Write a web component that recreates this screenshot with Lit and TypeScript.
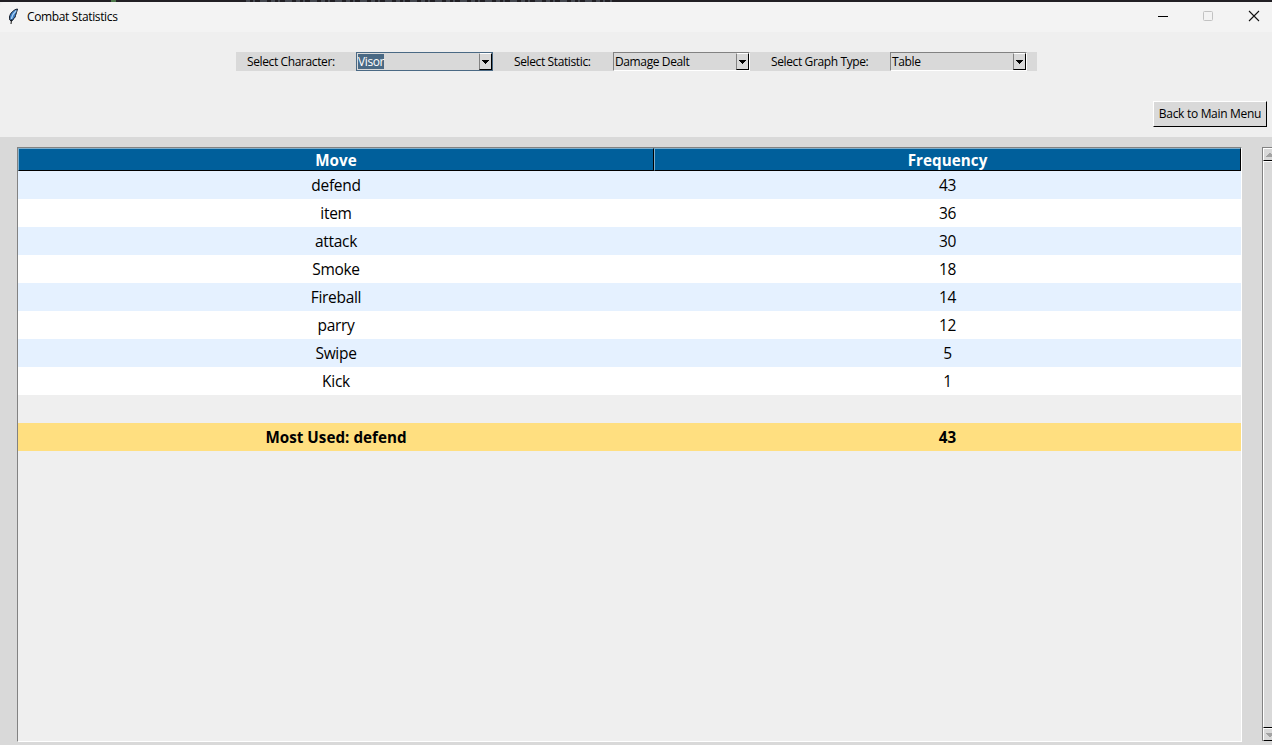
import { LitElement, html, css } from "lit";
import { customElement, property } from "lit/decorators.js";
import { classMap } from "lit/directives/class-map.js";

@customElement("combo-box")
class ComboBox extends LitElement {
  @property() value = "";
  @property({ type: Boolean }) focused = false;
  static styles = css`
    :host { display: block; width: 137px; height: 19px; }
    .box { box-sizing: border-box; display: flex; width: 137px; height: 19px; background: #d9d9d9;
      border: 1px solid; border-color: #828282 #fff #fff #828282; }
    .box.focused { border-color: #4a6984; }
    .text { flex: 1; height: 17px; line-height: 17px; padding-left: 1px; white-space: nowrap; }
    .selected { display: inline-block; height: 15px; line-height: 15px; margin-top: 1px; background: #4a6984; color: #fff; }
    .arrow { box-sizing: border-box; width: 13px; height: 17px; display: flex; align-items: center; justify-content: center;
      border: 1px solid; border-color: #fff #000 #000 #828282; background: #d9d9d9; }
    svg { display: block; }
  `;
  render() {
    return html`<div class=${classMap({ box: true, focused: this.focused })}>
      <div class="text"><span class=${classMap({ selected: this.focused })}>${this.value}</span></div>
      <div class="arrow"><svg width="7" height="4" shape-rendering="crispEdges"><path d="M0 0h7v1H6v1H5v1H4v1H3V3H2V2H1V1H0z"/></svg></div>
    </div>`;
  }
}

@customElement("app-root")
class AppRoot extends LitElement {
  moves: [string, number][] = [
    ["defend", 43], ["item", 36], ["attack", 30], ["Smoke", 18],
    ["Fireball", 14], ["parry", 12], ["Swipe", 5], ["Kick", 1],
  ];
  static styles = css`
    :host { display: flex; flex-direction: column; width: 1272px; height: 745px; overflow: hidden;
      background: #efefef; color: #000; font: 12px/19px "Open Sans", "Noto Sans", sans-serif; letter-spacing: -0.38px; }
    .backdrop { height: 2px; background: #211f24; flex: none; overflow: hidden; display: flex; }
    .backdrop svg { display: block; }
    .titlebar { height: 30px; flex: none; display: flex; align-items: center; background: #f3f3f3; border-top-left-radius: 5px; }
    .feather { margin: -2px 8px 0 7px; display: block; }
    .caption { flex: 1; margin-top: -2px; letter-spacing: -0.36px; }
    .controls { display: flex; gap: 34px; margin-right: 12px; margin-top: -2px; }
    .controls svg { display: block; }
    .filters { display: flex; flex: none; width: 801px; height: 19px; margin: 20px 0 0 236px; background: #d9d9d9; }
    .label { box-sizing: border-box; white-space: nowrap; }
    .first { width: 120px; padding-left: 11px; }
    .second { width: 120px; padding-left: 21px; }
    .third { width: 140px; padding-left: 21px; }
    .actions { display: flex; justify-content: flex-end; padding: 30px 5px 10px 0; flex: none; }
    .back { box-sizing: border-box; width: 114px; height: 26px; border: 1px solid; border-color: #fff #000 #000 #fff;
      background: #d9d9d9; text-align: center; line-height: 24px; white-space: nowrap; letter-spacing: -0.3px; }
    .panel { box-sizing: border-box; flex: 1; display: flex; background: #d9d9d9; padding: 10px 0 3px 17px; gap: 20px; }
    .table { box-sizing: border-box; width: 1225px; height: 595px; border: 1px solid; border-color: #828282 #fff #fff #828282;
      background: #efefef; font-size: 15.5px; letter-spacing: -0.3px; }
    .row { display: grid; grid-template-columns: 636px 587px; height: 28px; line-height: 28px; text-align: center; }
    .odd { background: #e5f1ff; }
    .even { background: #fff; }
    .total { background: #ffdf80; font-size: 15.2px; font-weight: 700; letter-spacing: 0.03px; }
    .header { height: 23px; color: #fff; font-size: 15.2px; font-weight: 700; line-height: 22px; letter-spacing: 0.05px; }
    .header div { box-sizing: border-box; height: 23px; background: #005f9b; border: 1px solid; border-color: #7fafcd #000 #000 #7fafcd; }
    .scroll { box-sizing: border-box; width: 10px; height: 594px; overflow: hidden; border: 1px solid; border-color: #828282 #d9d9d9 #d9d9d9 #828282;
      border-right: 0; border-bottom: 0; display: flex; flex-direction: column; }
    .cap { box-sizing: border-box; height: 13px; width: 13px; flex: none; border: 1px solid; border-color: #fff #000 #000 #fff; display: flex; align-items: center; justify-content: center; }
    .thumb { box-sizing: border-box; flex: 1; width: 13px; border: 1px solid; border-color: #fff #000 #000 #fff; }
  `;
  render() {
    return html`
      <div class="backdrop"><svg width="1272" height="2"><rect x="111" width="5" height="2" fill="#4b7548"/><path d="M246 1H612" stroke="#68717b" stroke-width="1" stroke-dasharray="4 3 2 5 7 4"/></svg></div>
      <div class="titlebar">
        <svg class="feather" width="12" height="17" viewBox="0 0 12 17"><path d="M10.5 1C7 1.5 3 5 2.5 9l.3 3L4 13l2-1 .5-1.5L8 9.5 8.5 7.5l1-3z" fill="#3f7fc6" stroke="#111a28" stroke-width="1"/><path d="M9.3 2.5C7 4.5 5 8 4.3 11" stroke="#a9d2f4" stroke-width="1.3" fill="none"/><path d="M4.5 11.5 4 16" stroke="#111" stroke-width="1" fill="none"/></svg>
        <span class="caption">Combat Statistics</span>
        <div class="controls">
          <svg width="12" height="12"><path d="M2 6.5h10" stroke="#000"/></svg>
          <svg width="12" height="12"><rect x="1.5" y="1.5" width="9" height="9" rx="1" fill="none" stroke="#c2c2c2"/></svg>
          <svg width="12" height="12"><path d="M1 1l10 10M11 1L1 11" stroke="#111" stroke-width="1.1"/></svg>
        </div>
      </div>
      <div class="filters">
        <div class="label first">Select Character:</div><combo-box value="Visor" focused></combo-box>
        <div class="label second">Select Statistic:</div><combo-box value="Damage Dealt"></combo-box>
        <div class="label third">Select Graph Type:</div><combo-box value="Table"></combo-box>
      </div>
      <div class="actions"><div class="back">Back to Main Menu</div></div>
      <div class="panel">
        <div class="table">
          <div class="row header"><div>Move</div><div>Frequency</div></div>
          ${this.moves.map(([name, count], i) => html`<div class=${classMap({ row: true, odd: i % 2 === 0, even: i % 2 === 1 })}><div>${name}</div><div>${count}</div></div>`)}
          <div class="row"></div>
          <div class="row total"><div>Most Used: defend</div><div>43</div></div>
        </div>
        <div class="scroll">
          <div class="cap"><svg width="8" height="4" shape-rendering="crispEdges"><path d="M3 0h2v1h1v1h1v1h1v1H0V3h1V2h1V1h1z" fill="#a3a3a3"/></svg></div>
          <div class="thumb"></div>
          <div class="cap"><svg width="8" height="4" shape-rendering="crispEdges"><path d="M0 0h8v1H7v1H6v1H5v1H3V3H2V2H1V1H0z" fill="#a3a3a3"/></svg></div>
        </div>
      </div>`;
  }
}
